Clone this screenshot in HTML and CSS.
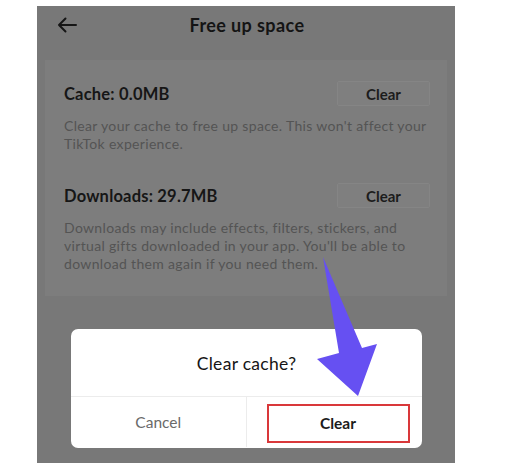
FILE: index.html
```html
<!DOCTYPE html>
<html lang="en">
<head>
    <meta charset="UTF-8">
    <title>Free up space</title>
    <link rel="stylesheet" href="styles.css">
</head>
<body>
    <div class="phone">
        <div class="header">
            <svg class="back-icon" width="20" height="16" viewBox="0 0 20 16">
                <path d="M19 8H2M8.5 1.5L2 8l6.5 6.5" fill="none" stroke="#151515" stroke-width="2" stroke-linecap="round" stroke-linejoin="round"/>
            </svg>
            <h1>Free up space</h1>
        </div>

        <div class="panel">
            <div class="section">
                <div class="row">
                    <span class="size-title">Cache: 0.0MB</span>
                    <button class="clear-btn">Clear</button>
                </div>
                <p class="desc">Clear your cache to free up space. This won't affect your TikTok experience.</p>
            </div>
            <div class="section">
                <div class="row">
                    <span class="size-title">Downloads: 29.7MB</span>
                    <button class="clear-btn">Clear</button>
                </div>
                <p class="desc">Downloads may include effects, filters, stickers, and virtual gifts downloaded in your app. You'll be able to download them again if you need them.</p>
            </div>
        </div>

        <div class="dialog">
            <div class="dialog-title">Clear cache?</div>
            <div class="dialog-actions">
                <div class="action cancel">Cancel</div>
                <div class="action confirm"><span class="highlight">Clear</span></div>
            </div>
        </div>

        <svg class="pointer" width="80" height="150" viewBox="0 0 80 150">
            <polygon points="9,3 48,94 63,90 44,142 3,105 25,99" fill="#6650f2"/>
        </svg>
    </div>
</body>
</html>
```

FILE: styles.css
```css
body {
    margin: 0;
    background-color: #ffffff;
    font-family: 'Lato', 'Liberation Sans', sans-serif;
}

.phone {
    position: relative;
    margin: 6px 0 0 37px;
    width: 418px;
    height: 457px;
    background-color: #787878;
    overflow: hidden;
}

.header {
    position: relative;
    height: 54px;
    display: flex;
    justify-content: center;
}

.back-icon {
    position: absolute;
    left: 20px;
    top: 11px;
}

h1 {
    margin: 8px 0 0 2px;
    font-size: 18px;
    font-weight: 700;
    letter-spacing: 0.4px;
    color: #141414;
    line-height: 22px;
}

.panel {
    margin: 0 8px;
    height: 236px;
    background-color: #7d7d7d;
    box-sizing: border-box;
    padding: 0 17px 0 19px;
}

.section {
    padding-top: 21px;
}

.section + .section {
    padding-top: 30px;
}

.row {
    display: flex;
    justify-content: space-between;
    align-items: center;
    height: 25px;
}

.size-title {
    font-size: 16.5px;
    font-weight: 700;
    letter-spacing: 0.2px;
    color: #161616;
}

.clear-btn {
    width: 93px;
    height: 25px;
    border: 1px solid #858585;
    border-radius: 2px;
    background-color: #7f7f7f;
    font-family: inherit;
    font-size: 15px;
    font-weight: 700;
    color: #1c1c1c;
    padding: 0;
}

.desc {
    margin: 11px 0 0;
    font-size: 14px;
    letter-spacing: 0.33px;
    line-height: 18px;
    color: #545454;
}

.dialog {
    position: absolute;
    left: 34px;
    top: 323px;
    width: 351px;
    height: 119px;
    background-color: #ffffff;
    border-radius: 7px;
}

.dialog-title {
    height: 68px;
    display: flex;
    align-items: center;
    justify-content: center;
    font-size: 17.5px;
    letter-spacing: 0.3px;
    color: #161616;
    border-bottom: 1px solid #ececec;
    padding-top: 2px;
    box-sizing: border-box;
}

.dialog-actions {
    display: flex;
    height: 50px;
}

.action {
    flex: 0 0 50%;
    box-sizing: border-box;
    display: flex;
    align-items: center;
    justify-content: center;
    font-size: 15.5px;
}

.cancel {
    color: #6a6a6a;
    border-right: 1px solid #ececec;
}

.confirm {
    justify-content: flex-start;
    padding-left: 20px;
    color: #1c1c1c;
    font-weight: 700;
}

.highlight {
    width: 139px;
    height: 35px;
    border: 2px solid #d9383a;
    display: flex;
    align-items: center;
    justify-content: center;
    margin-top: 2px;
}

.pointer {
    position: absolute;
    left: 277px;
    top: 248px;
}
```
